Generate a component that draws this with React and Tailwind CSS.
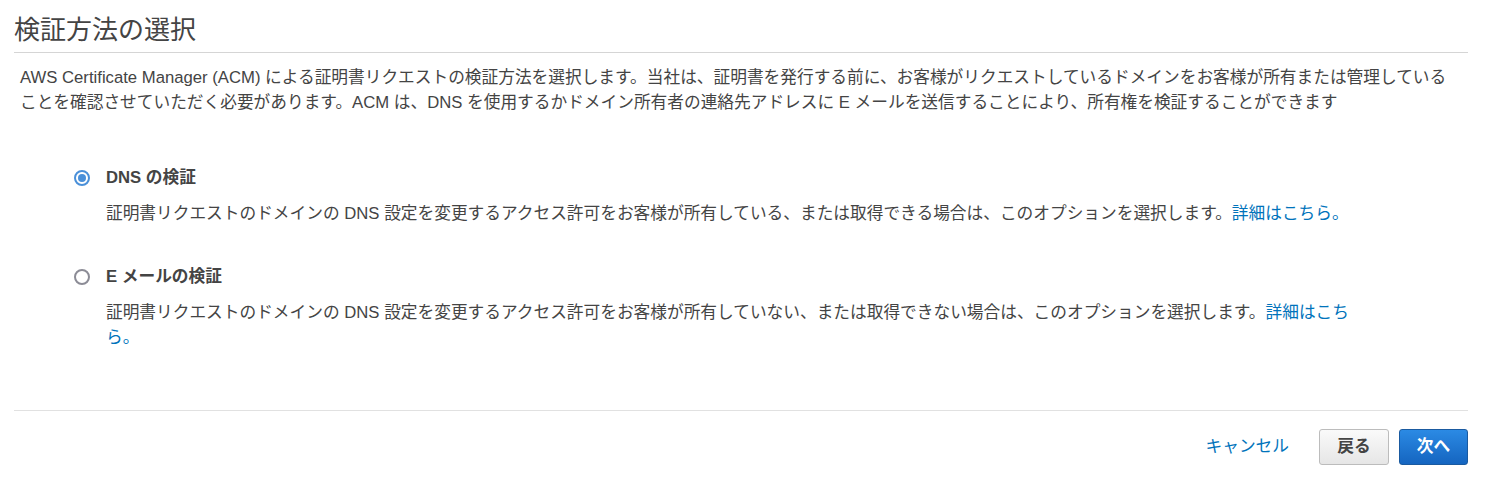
import { useState } from 'react';

const font = { fontFamily: '"Liberation Sans", "Noto Sans CJK JP", sans-serif' };

function Option({ checked, onSelect, label, children }) {
  return (
    <label className="flex items-start cursor-pointer" onClick={onSelect}>
      <span
        className={
          'mt-[5px] ml-[60px] mr-[16px] flex h-[16px] w-[16px] shrink-0 items-center justify-center rounded-full border-2 bg-white ' +
          (checked ? 'border-[#4a90d9]' : 'border-[#8c8c96]')
        }
      >
        {checked && <span className="h-[8px] w-[8px] rounded-full bg-[#4a90d9]" />}
      </span>
      <div>
        <div className="text-[16.7px] font-bold leading-[26px] text-[#444]">{label}</div>
        <p className="mt-[10px] max-w-[1256px] text-[16.7px] leading-[25px] text-[#444]">{children}</p>
      </div>
    </label>
  );
}

export default function App() {
  const [method, setMethod] = useState('dns');

  return (
    <div className="min-h-[478px] bg-white pl-[14px] pr-[30px]" style={font}>
      <h2 className="border-b border-[#d5d5d5] pt-[14px] pb-[6px] text-[26px] leading-[32px] text-[#444]">
        検証方法の選択
      </h2>
      <p className="mt-[12px] pl-[6px] pr-[10px] text-[16.7px] leading-[25px] text-[#444]">
        AWS Certificate Manager (ACM) による証明書リクエストの検証方法を選択します。当社は、証明書を発行する前に、お客様がリクエストしているドメインをお客様が所有または管理していることを確認させていただく必要があります。ACM は、DNS を使用するかドメイン所有者の連絡先アドレスに E メールを送信することにより、所有権を検証することができます
      </p>

      <div className="flex flex-col gap-[38px] pt-[50px] pb-[60px]">
        <Option checked={method === 'dns'} onSelect={() => setMethod('dns')} label="DNS の検証">
          証明書リクエストのドメインの DNS 設定を変更するアクセス許可をお客様が所有している、または取得できる場合は、このオプションを選択します。
          <a href="#" className="text-[#0073bb]">詳細はこちら。</a>
        </Option>
        <Option checked={method === 'email'} onSelect={() => setMethod('email')} label="E メールの検証">
          証明書リクエストのドメインの DNS 設定を変更するアクセス許可をお客様が所有していない、または取得できない場合は、このオプションを選択します。
          <a href="#" className="text-[#0073bb]">詳細はこちら。</a>
        </Option>
      </div>

      <div className="flex items-center justify-end gap-[10px] border-t border-[#e1e1e1] pt-[18px]">
        <a href="#" className="mr-[20px] text-[16.7px] text-[#0073bb]">キャンセル</a>
        <button className="h-[36px] w-[70px] rounded-[3px] border border-[#bcbcbc] bg-gradient-to-b from-[#fafafa] to-[#e6e6e6] text-[16.7px] font-bold text-[#444]">
          戻る
        </button>
        <button className="h-[36px] w-[69px] rounded-[3px] border border-[#1a5aa0] bg-gradient-to-b from-[#2b8ae4] to-[#1565c0] text-[16.7px] font-bold text-white">
          次へ
        </button>
      </div>
    </div>
  );
}
